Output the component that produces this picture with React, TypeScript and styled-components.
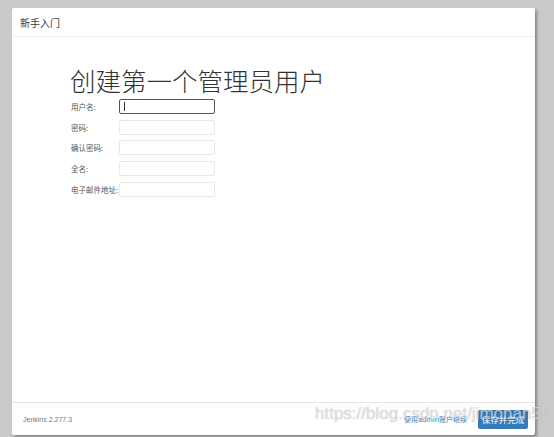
import styled, { createGlobalStyle } from "styled-components";

const GlobalStyle = createGlobalStyle`
  html, body {
    margin: 0;
    padding: 0;
    background: #cacaca;
    font-family: "Liberation Sans", "Noto Sans CJK SC", sans-serif;
  }
`;

const fields = [
  { label: "用户名:", focused: true },
  { label: "密码:", focused: false },
  { label: "确认密码:", focused: false },
  { label: "全名:", focused: false },
  { label: "电子邮件地址:", focused: false },
];

const App: React.FC = () => {
  return (
    <>
      <GlobalStyle />
      <Page>
        <Modal>
          <Header>新手入门</Header>
          <Content>
            <Heading>创建第一个管理员用户</Heading>
            <Form>
              {fields.map((f) => (
                <Row key={f.label}>
                  <Label>{f.label}</Label>
                  <Input $focused={f.focused}>{f.focused && <Caret />}</Input>
                </Row>
              ))}
            </Form>
          </Content>
          <Footer>
            <Version>Jenkins 2.277.3</Version>
            <Actions>
              <SkipLink>使用admin账户继续</SkipLink>
              <SaveButton>保存并完成</SaveButton>
            </Actions>
            <Watermark>https://blog.csdn.net/jimonan55</Watermark>
          </Footer>
        </Modal>
      </Page>
    </>
  );
};

export default App;

const Page = styled.div`
  width: 554px;
  height: 437px;
  padding: 8px 0 0 12px;
  box-sizing: border-box;
`;

const Modal = styled.div`
  width: 523px;
  height: 427px;
  background: #fff;
  border-radius: 2px;
  box-shadow: 2px 2px 3px rgba(0, 0, 0, 0.35);
  display: flex;
  flex-direction: column;
`;

const Header = styled.div`
  height: 29px;
  box-sizing: border-box;
  border-bottom: 1px solid #efefef;
  padding: 0 0 0 8px;
  display: flex;
  align-items: center;
  font-size: 10px;
  color: #3a3a3a;
  font-family: "Noto Sans CJK SC", sans-serif;
`;

const Content = styled.div`
  flex: 1;
  padding: 28px 0 0 58px;
`;

const Heading = styled.h1`
  margin: 0 0 4px;
  font-family: "Noto Sans CJK SC", sans-serif;
  font-weight: 300;
  font-size: 25.5px;
  line-height: 30px;
  color: #333;
`;

const Form = styled.div`
  display: flex;
  flex-direction: column;
  gap: 5.7px;
  padding-left: 1px;
`;

const Row = styled.div`
  display: flex;
  align-items: center;
`;

const Label = styled.span`
  width: 48px;
  white-space: nowrap;
  font-family: "Noto Sans CJK SC", sans-serif;
  font-size: 7.5px;
  color: #555;
`;

const Input = styled.div<{ $focused: boolean }>`
  width: 96px;
  height: 15px;
  box-sizing: border-box;
  border: 1px solid ${(p) => (p.$focused ? "#555" : "#e8e8e8")};
  border-radius: 2px;
  display: flex;
  align-items: center;
  padding-left: 4px;
`;

const Caret = styled.span`
  width: 1px;
  height: 9px;
  background: #333;
`;

const Footer = styled.div`
  position: relative;
  height: 33px;
  box-sizing: border-box;
  border-top: 1px solid #e4e4e4;
  padding: 0 7px 0 11px;
  display: flex;
  align-items: center;
  justify-content: space-between;
`;

const Version = styled.span`
  font-size: 7px;
  color: #777;
`;

const Actions = styled.div`
  display: flex;
  align-items: center;
  gap: 11px;
`;

const SkipLink = styled.span`
  font-family: "Noto Sans CJK SC", sans-serif;
  font-size: 7px;
  color: #337ab7;
`;

const SaveButton = styled.span`
  width: 50px;
  height: 19px;
  background: #337ab7;
  border-radius: 2px;
  color: #fff;
  font-family: "Noto Sans CJK SC", sans-serif;
  font-size: 8.5px;
  display: flex;
  align-items: center;
  justify-content: center;
`;

const Watermark = styled.span`
  position: absolute;
  left: 303px;
  top: 1px;
  font-family: "Liberation Sans", sans-serif;
  font-size: 17px;
  color: rgba(255, 255, 255, 0.55);
  text-shadow: 0 0 1px rgba(120, 120, 120, 0.6);
  white-space: nowrap;
  pointer-events: none;
`;
